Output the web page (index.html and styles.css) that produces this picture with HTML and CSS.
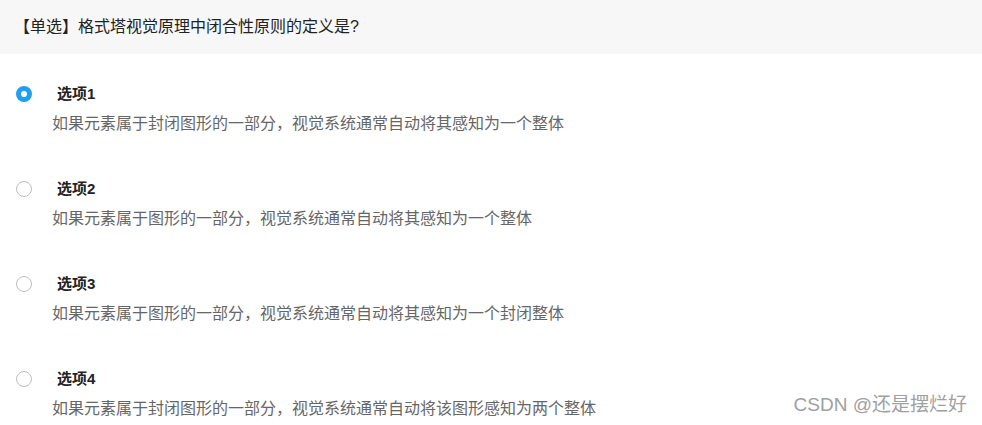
FILE: index.html
```html
<!DOCTYPE html>
<html lang="zh-CN">
<head>
<meta charset="utf-8">
<title>单选题</title>
<link rel="stylesheet" href="styles.css">
</head>
<body>
<div class="page">
  <div class="question">【单选】格式塔视觉原理中闭合性原则的定义是?</div>
  <div class="options">
    <div class="option">
      <span class="radio checked"></span>
      <span class="title">选项1</span>
      <span class="desc">如果元素属于封闭图形的一部分，视觉系统通常自动将其感知为一个整体</span>
    </div>
    <div class="option">
      <span class="radio"></span>
      <span class="title">选项2</span>
      <span class="desc">如果元素属于图形的一部分，视觉系统通常自动将其感知为一个整体</span>
    </div>
    <div class="option">
      <span class="radio"></span>
      <span class="title">选项3</span>
      <span class="desc">如果元素属于图形的一部分，视觉系统通常自动将其感知为一个封闭整体</span>
    </div>
    <div class="option">
      <span class="radio"></span>
      <span class="title">选项4</span>
      <span class="desc">如果元素属于封闭图形的一部分，视觉系统通常自动将该图形感知为两个整体</span>
    </div>
  </div>
  <div class="watermark">CSDN @还是摆烂好</div>
</div>
</body>
</html>
```

FILE: styles.css
```css
* { box-sizing: border-box; }
html, body { margin: 0; padding: 0; background: #fff; }
body {
  font-family: "Liberation Sans", "Noto Sans CJK SC", sans-serif;
  color: #333;
}
.page {
  position: relative;
  width: 982px;
  height: 425px;
  overflow: hidden;
}
.question {
  height: 54px;
  background: #f7f7f7;
  padding-left: 14px;
  font-size: 16px;
  line-height: 54px;
  color: #222;
}
.options {
  display: flex;
  flex-direction: column;
  gap: 41px;
  padding-top: 28px;
}
.option {
  display: grid;
  grid-template-columns: 16px auto;
  grid-template-rows: 24px 24px;
  column-gap: 25px;
  row-gap: 6px;
  padding-left: 16px;
  align-items: center;
}
.radio {
  width: 16px;
  height: 16px;
  border-radius: 50%;
  border: 1px solid #bdbdbd;
  background: #fff;
}
.radio.checked {
  border: 5px solid #1f9ff0;
}
.title {
  font-weight: bold;
  font-size: 15px;
  line-height: 24px;
  color: #222;
  justify-self: start;
}
.desc {
  grid-column: 1 / 3;
  margin-left: 36px;
  font-size: 16px;
  line-height: 24px;
  color: #666;
}
.watermark {
  position: absolute;
  right: 15px;
  bottom: 8px;
  font-size: 19px;
  line-height: 24px;
  color: #a0a0a0;
}
```
